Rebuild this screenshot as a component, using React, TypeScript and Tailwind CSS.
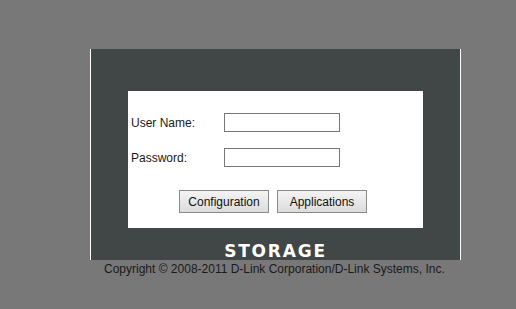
import React from "react";

export default function App() {
  return (
    <div className="w-[516px] h-[309px] bg-[#787878] pt-[49px] font-['Liberation_Sans',Arial,sans-serif] overflow-hidden">
      <div className="ml-[90px] w-[371px] h-[211px] bg-[#414646] border-x border-white pt-[42px]">
        <div className="ml-[37px] w-[295px] h-[137px] bg-white pt-[22px]">
          <div className="flex items-center h-[19px]">
            <label className="w-[96px] pl-[3px] text-[12px] text-[#1a1a1a]">User Name:</label>
            <input type="text" className="w-[116px] h-[19px] border border-[#767676] bg-white outline-none" />
          </div>
          <div className="flex items-center h-[19px] mt-[16px]">
            <label className="w-[96px] pl-[3px] text-[12px] text-[#1a1a1a]">Password:</label>
            <input type="password" className="w-[116px] h-[19px] border border-[#767676] bg-white outline-none" />
          </div>
          <div className="flex gap-[8px] ml-[51px] mt-[23px]">
            <button className="w-[90px] h-[23px] pt-[1px] border border-[#8a8a8a] bg-gradient-to-b from-[#f4f4f4] to-[#dcdcdc] text-[12px] text-[#111]">
              Configuration
            </button>
            <button className="w-[90px] h-[23px] pt-[1px] border border-[#8a8a8a] bg-gradient-to-b from-[#f4f4f4] to-[#dcdcdc] text-[12px] text-[#111]">
              Applications
            </button>
          </div>
        </div>
        <div className="mt-[13px] text-center text-white font-['DejaVu_Sans',sans-serif] font-bold text-[17px] leading-[20px] tracking-[1.8px]">
          STORAGE
        </div>
      </div>
      <div className="w-[516px] pl-[104px] text-[12px] leading-[16px] text-[#1a1a1a] mt-[1px]">
        Copyright © 2008-2011 D-Link Corporation/D-Link Systems, Inc.
      </div>
    </div>
  );
}
